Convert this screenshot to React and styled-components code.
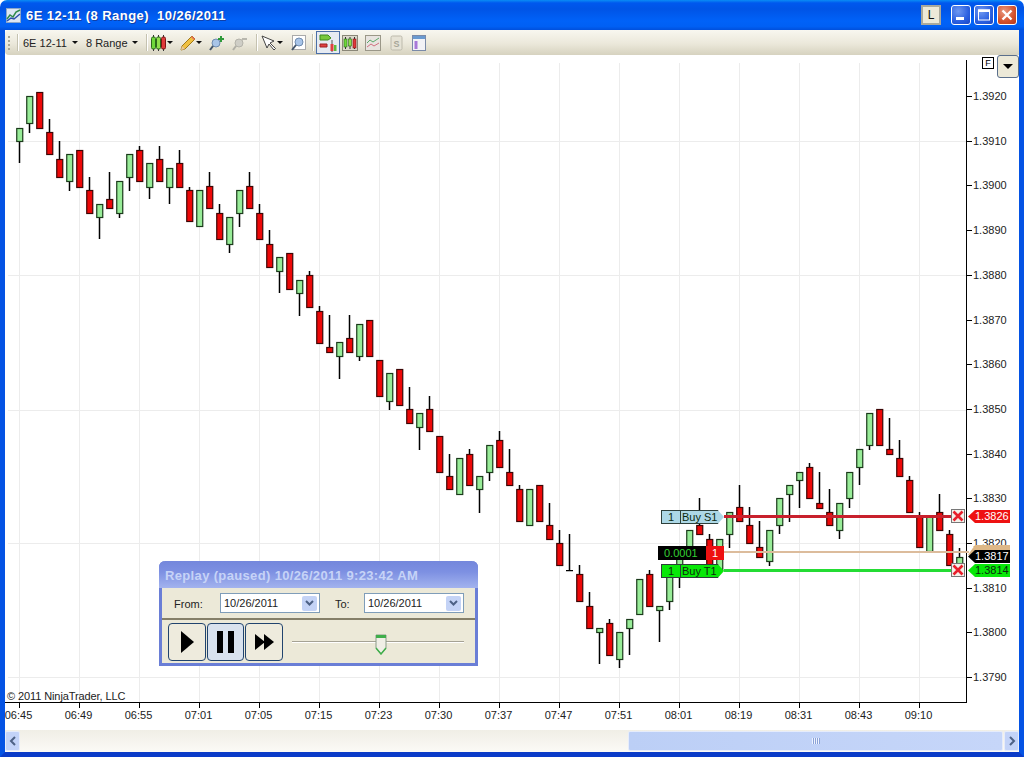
import { createGlobalStyle, styled } from 'styled-components';

const GlobalStyle = createGlobalStyle`
  html, body {
    margin: 0;
    padding: 0;
    background: #fff;
  }
  * { box-sizing: border-box; }
`;

const FONT = '"Liberation Sans", Arial, sans-serif';

// type, body top, body bottom, wick top, wick bottom (first candle at x=19, every 10px)
const CANDLES = [
  ['g', 128, 141, 128, 163], ['g', 96, 123, 96, 133], ['r', 92, 128, 92, 128], ['r', 132, 154, 119, 154],
  ['r', 159, 177, 141, 177], ['g', 154, 181, 154, 191], ['r', 150, 187, 150, 187], ['r', 190, 213, 177, 213],
  ['g', 204, 217, 204, 239], ['r', 199, 208, 172, 208], ['g', 181, 213, 181, 218], ['g', 154, 177, 154, 191],
  ['r', 150, 181, 146, 181], ['g', 163, 187, 163, 199], ['r', 159, 181, 146, 181], ['g', 168, 187, 168, 204],
  ['r', 163, 187, 150, 187], ['r', 190, 221, 187, 221], ['g', 190, 226, 190, 226], ['r', 186, 208, 172, 208],
  ['r', 213, 239, 204, 239], ['g', 217, 244, 217, 253], ['g', 190, 213, 190, 227], ['r', 186, 208, 172, 208],
  ['r', 213, 239, 204, 239], ['r', 244, 267, 230, 267], ['g', 257, 271, 257, 293], ['r', 253, 289, 253, 289],
  ['g', 280, 293, 280, 316], ['r', 275, 307, 271, 307], ['r', 311, 343, 306, 343], ['r', 347, 352, 315, 352],
  ['g', 342, 356, 342, 379], ['r', 338, 352, 315, 352], ['g', 324, 356, 324, 361], ['r', 320, 356, 320, 356],
  ['r', 360, 396, 360, 396], ['g', 373, 401, 373, 410], ['r', 369, 405, 369, 405], ['r', 409, 423, 387, 423],
  ['g', 413, 427, 413, 450], ['r', 409, 431, 396, 431], ['r', 436, 472, 436, 472], ['r', 476, 489, 454, 489],
  ['g', 458, 494, 458, 494], ['r', 454, 485, 449, 485], ['g', 476, 489, 476, 513], ['g', 445, 472, 445, 481],
  ['r', 440, 467, 431, 467], ['r', 472, 485, 449, 485], ['r', 489, 521, 485, 521], ['g', 489, 525, 489, 525],
  ['r', 485, 521, 485, 521], ['r', 525, 539, 503, 539], ['r', 543, 565, 530, 565], ['d', 570, 570, 534, 570],
  ['r', 574, 601, 565, 601], ['r', 606, 628, 592, 628], ['g', 628, 632, 628, 664], ['r', 623, 655, 619, 655],
  ['g', 632, 659, 632, 668], ['g', 619, 628, 619, 655], ['g', 579, 614, 579, 614], ['r', 574, 606, 570, 606],
  ['g', 606, 610, 606, 642], ['g', 565, 601, 565, 610], ['g', 547, 565, 547, 588], ['g', 530, 556, 530, 556],
  ['r', 525, 534, 498, 534], ['r', 539, 565, 534, 565], ['g', 539, 570, 539, 570], ['g', 512, 534, 512, 548],
  ['r', 507, 521, 485, 521], ['r', 525, 543, 507, 543], ['r', 547, 557, 521, 557], ['g', 530, 561, 530, 566],
  ['g', 498, 525, 498, 534], ['g', 485, 494, 485, 522], ['g', 472, 480, 472, 508], ['r', 467, 498, 463, 498],
  ['r', 503, 508, 472, 508], ['r', 512, 525, 489, 525], ['g', 503, 530, 503, 539], ['g', 472, 498, 472, 508],
  ['g', 449, 467, 449, 485], ['g', 413, 445, 413, 450], ['r', 409, 445, 409, 445], ['r', 449, 454, 418, 454],
  ['r', 458, 476, 440, 476], ['r', 480, 512, 476, 512], ['r', 516, 547, 512, 547], ['g', 516, 551, 516, 551],
  ['r', 512, 530, 494, 530], ['r', 534, 565, 530, 565], ['g', 557, 565, 548, 565],
];

const TIMES = ['06:45', '06:49', '06:55', '07:01', '07:05', '07:15', '07:23', '07:30', '07:37', '07:47', '07:51', '08:01', '08:19', '08:31', '08:43', '09:10'];
const PRICES = ['1.3920', '1.3910', '1.3900', '1.3890', '1.3880', '1.3870', '1.3860', '1.3850', '1.3840', '1.3830', '1.3820', '1.3810', '1.3800', '1.3790'];
const H_GRID = [141, 275, 410, 543, 677];

const Window = styled.div`
  position: relative;
  width: 1024px;
  height: 757px;
  display: flex;
  flex-direction: column;
  font-family: ${FONT};
  overflow: hidden;
`;

const TitleBar = styled.header`
  height: 30px;
  flex: none;
  display: flex;
  align-items: center;
  padding: 0 7px 0 6px;
  border-radius: 7px 7px 0 0;
  background: linear-gradient(180deg, #0a8cf5 0%, #0058ee 10%, #0054e6 30%, #0062f8 70%, #0060f4 88%, #0050dc 100%);
`;

const TitleText = styled.h1`
  margin: 0 0 0 5px;
  font-size: 13px;
  font-weight: bold;
  color: #fff;
  white-space: pre;
  letter-spacing: 0.45px;
  text-shadow: 1px 1px 0 #0f3fa8;
`;

const WindowControls = styled.div`
  margin-left: auto;
  display: flex;
  align-items: center;
  gap: 3px;
`;

const PinButton = styled.div`
  width: 20px;
  height: 20px;
  margin-right: 7px;
  display: flex;
  align-items: center;
  justify-content: center;
  font-size: 12px;
  color: #111;
  background: #ece9d8;
  border: 2px solid #a9a99c;
`;

const CaptionButton = styled.div`
  width: 20px;
  height: 20px;
  border: 1px solid #fff;
  border-radius: 3px;
  display: flex;
  align-items: center;
  justify-content: center;
  background: ${(p) =>
    p.$close
      ? 'radial-gradient(circle at 35% 30%, #e89a80, #d4502c 60%, #b83a18)'
      : 'radial-gradient(circle at 35% 30%, #6f98f0, #2a5fe0 60%, #1a46c4)'};
`;

const Frame = styled.div`
  flex: 1;
  min-height: 0;
  display: flex;
  flex-direction: column;
  border-left: 5px solid #0453e4;
  border-right: 5px solid #0453e4;
  border-bottom: 5px solid #0a3bc8;
  background: #fff;
`;

const Toolbar = styled.div`
  height: 25px;
  flex: none;
  display: flex;
  align-items: center;
  border-radius: 4px 0 0 4px;
  background: linear-gradient(180deg, #f8f7f0 0%, #ebe8da 55%, #d6d2bf 100%);
  font-size: 11px;
  color: #222;
`;

const Grip = styled.div`
  width: 2px;
  height: 14px;
  margin-left: 3px;
  background: repeating-linear-gradient(180deg, #a8a594 0 2px, transparent 2px 4px);
`;

const ToolSep = styled.div`
  width: 1px;
  height: 17px;
  margin-left: ${(p) => p.$ml}px;
  background: #c5c2b0;
  box-shadow: 1px 0 0 #fff;
`;

const DropText = styled.span`
  width: ${(p) => p.$w}px;
  margin-left: ${(p) => p.$ml}px;
  white-space: nowrap;
`;

const Caret = styled.span`
  flex: none;
  width: 0;
  height: 0;
  margin-left: ${(p) => p.$ml}px;
  border-left: 3px solid transparent;
  border-right: 3px solid transparent;
  border-top: 3px solid #111;
`;

const ToolIcon = styled.svg`
  flex: none;
  width: ${(p) => p.$w || 16}px;
  height: 16px;
  margin-left: ${(p) => p.$ml}px;
`;

const ToggleButton = styled.div`
  flex: none;
  width: 24px;
  height: 23px;
  margin-left: 3px;
  display: flex;
  align-items: center;
  justify-content: center;
  border: 1px solid #4b6fa8;
  background: #e6ebf2;
`;

const ChartArea = styled.main`
  position: relative;
  flex: 1;
  min-height: 0;
`;

const ChartSvg = styled.svg`
  display: block;
  width: 1014px;
  height: 675px;
  font-family: ${FONT};
  font-size: 11px;
`;

const ScaleBox = styled.div`
  position: absolute;
  left: 977px;
  top: 2px;
  width: 12px;
  height: 12px;
  display: flex;
  align-items: center;
  justify-content: center;
  border: 1px solid #000;
  background: #fff;
  font-size: 9px;
`;

const ScaleMenu = styled.div`
  position: absolute;
  left: 992px;
  top: 0;
  width: 22px;
  height: 23px;
  display: flex;
  align-items: center;
  justify-content: center;
  border: 1px solid #5a6f8c;
  border-radius: 3px;
  background: #ece9d8;
  &::after {
    content: '';
    border-left: 5px solid transparent;
    border-right: 5px solid transparent;
    border-top: 5px solid #000;
  }
`;

const OrderLine = styled.div`
  position: absolute;
  left: ${(p) => p.$x - 5}px;
  top: ${(p) => p.$y - 55}px;
  width: ${(p) => p.$w}px;
  height: ${(p) => p.$h || 3}px;
  background: ${(p) => p.$color};
`;

const OrderTag = styled.div`
  position: absolute;
  left: ${(p) => p.$x - 5}px;
  top: ${(p) => p.$y - 55}px;
  width: 63px;
  height: 14px;
  display: flex;
  font-size: 11px;
  line-height: 12px;
  color: #0c2a10;
  background: ${(p) => p.$color};
  border: 1px solid #2d3f3a;
  border-right: none;
  clip-path: polygon(0 0, 90% 0, 100% 50%, 90% 100%, 0 100%);
`;

const TagQty = styled.span`
  width: 19px;
  text-align: center;
  border-right: 1px solid #2d3f3a;
`;

const TagName = styled.span`
  padding-left: 1px;
  white-space: nowrap;
`;

const PnlTag = styled.div`
  position: absolute;
  left: 653px;
  top: 491px;
  width: 66px;
  height: 14px;
  display: flex;
  font-size: 11px;
  line-height: 14px;
`;

const PnlValue = styled.span`
  width: 48px;
  padding-left: 6px;
  background: #000;
  color: #34d034;
`;

const PnlQty = styled.span`
  flex: 1;
  text-align: center;
  background: #ee1111;
  color: #fff;
`;

const CloseBox = styled.div`
  position: absolute;
  left: 946px;
  top: ${(p) => p.$y - 55}px;
  width: 14px;
  height: 14px;
  display: flex;
  border: 1px solid #777;
  background: #f4f1ea;
`;

const PriceTag = styled.div`
  position: absolute;
  left: 963px;
  top: ${(p) => p.$y - 55}px;
  width: 42px;
  height: 13px;
  padding-left: 7px;
  font-size: 11px;
  line-height: 13px;
  color: ${(p) => p.$color};
  background: ${(p) => p.$bg};
  clip-path: polygon(0 50%, 7px 0, 100% 0, 100% 100%, 7px 100%);
`;

const TanCap = styled.div`
  position: absolute;
  left: 963px;
  top: 490px;
  width: 42px;
  height: 10px;
  background: #deb887;
  clip-path: polygon(0 100%, 7px 0, 100% 0, 100% 100%);
`;

const ReplayPanel = styled.section`
  position: absolute;
  left: 154px;
  top: 506px;
  width: 319px;
  height: 105px;
  display: flex;
  flex-direction: column;
  border: 3px solid #6a7ed6;
  border-top: none;
  border-radius: 6px 6px 0 0;
  background: #ece9d8;
`;

const ReplayTitle = styled.div`
  height: 27px;
  flex: none;
  margin: 0 -3px;
  padding: 1px 0 0 6px;
  display: flex;
  align-items: center;
  border-radius: 6px 6px 0 0;
  background: linear-gradient(180deg, #7487dc 0%, #7d90e2 40%, #a3b3ee 100%);
  color: #c6d3f7;
  font-size: 13px;
  font-weight: bold;
  letter-spacing: 0.35px;
  white-space: nowrap;
`;

const RangeRow = styled.div`
  height: 32px;
  flex: none;
  display: flex;
  align-items: center;
  padding: 0 0 0 12px;
  border-bottom: 2px solid #857f68;
  font-size: 11px;
  color: #222;
`;

const RangeLabel = styled.span`
  width: ${(p) => p.$w}px;
  padding-top: 2px;
`;

const DateCombo = styled.div`
  width: 100px;
  height: 20px;
  display: flex;
  align-items: center;
  justify-content: space-between;
  padding: 0 2px 0 3px;
  border: 1px solid #7f9db9;
  background: #fff;
  font-size: 11px;
  margin-right: ${(p) => p.$mr || 0}px;
`;

const ComboArrow = styled.div`
  width: 15px;
  height: 15px;
  display: flex;
  align-items: center;
  justify-content: center;
  border-radius: 2px;
  background: #c4d3f6;
`;

const TransportRow = styled.div`
  flex: 1;
  display: flex;
  align-items: center;
  padding: 0 0 0 6px;
  gap: 1px;
`;

const TransportButton = styled.div`
  width: ${(p) => p.$w}px;
  height: 38px;
  display: flex;
  align-items: center;
  justify-content: center;
  border: 1px solid #21446e;
  border-radius: 4px;
  background: ${(p) => (p.$on ? '#d9e2ee' : '#eeebdd')};
`;

const SliderTrack = styled.div`
  position: relative;
  width: 172px;
  height: 2px;
  margin-left: 8px;
  background: #a5a294;
  border-bottom: 1px solid #fff;
`;

const SliderThumb = styled.svg`
  position: absolute;
  left: 83px;
  top: -8px;
  width: 12px;
  height: 22px;
`;

const ScrollBar = styled.div`
  height: 22px;
  flex: none;
  display: flex;
  align-items: stretch;
  padding: 1px 0;
  background: linear-gradient(180deg, #f0eee6 0%, #fbfaf6 100%);
`;

const ScrollButton = styled.div`
  width: 15px;
  display: flex;
  align-items: center;
  justify-content: center;
  border: 1px solid #e6ecfb;
  border-radius: 2px;
  background: #c3d3f8;
`;

const ScrollTrack = styled.div`
  flex: 1;
  padding-left: 608px;
  padding-right: 1px;
  display: flex;
`;

const ScrollThumb = styled.div`
  flex: 1;
  display: flex;
  align-items: center;
  justify-content: center;
  border: 1px solid #e6ecfb;
  border-radius: 2px;
  background: linear-gradient(90deg, #bccff6 0%, #c6d6f9 100%);
`;

const ThumbGrip = styled.div`
  width: 8px;
  height: 6px;
  background: repeating-linear-gradient(90deg, #eef3fe 0 1px, #8aa2d8 1px 2px);
`;

function Candle({ c, i }) {
  const [type, top, bottom, wickTop, wickBottom] = c;
  const x = 19 + i * 10;
  if (type === 'd') {
    return (
      <g fill="#000">
        <rect x={x - 0.25} y={wickTop} width={1.5} height={wickBottom - wickTop} />
        <rect x={x - 3} y={top} width={7} height={1.25} />
      </g>
    );
  }
  return (
    <g>
      <rect x={x - 0.25} y={wickTop} width={1.5} height={wickBottom - wickTop} fill="#000" />
      <rect
        x={x - 2.25}
        y={top + 0.5}
        width={6}
        height={bottom - top}
        fill={type === 'g' ? '#98ec98' : '#ee0808'}
        stroke={type === 'g' ? '#1a3a1a' : '#3c0505'}
        strokeWidth={1.2}
      />
    </g>
  );
}

function Chart() {
  return (
    <ChartSvg viewBox="5 55 1014 675">
      <g stroke="#ececec" strokeWidth={1} shapeRendering="crispEdges">
        {TIMES.map((t, i) => (
          <line key={t} x1={19.5 + i * 60} x2={19.5 + i * 60} y1={63} y2={702} />
        ))}
        {H_GRID.map((y) => (
          <line key={y} x1={8} x2={966} y1={y + 0.5} y2={y + 0.5} />
        ))}
      </g>
      {CANDLES.map((c, i) => (
        <Candle key={i} c={c} i={i} />
      ))}
      <g stroke="#000" strokeWidth={1} shapeRendering="crispEdges">
        <line x1={5} x2={967} y1={702.5} y2={702.5} />
        <line x1={966.5} x2={966.5} y1={60} y2={702} />
        {TIMES.map((t, i) => (
          <line key={t} x1={19.5 + i * 60} x2={19.5 + i * 60} y1={702} y2={708} />
        ))}
        {PRICES.map((p, i) => (
          <line key={p} x1={966} x2={972} y1={96.5 + i * 44.7} y2={96.5 + i * 44.7} />
        ))}
      </g>
      <g fill="#222">
        {TIMES.map((t, i) => (
          <text key={t} x={18.5 + i * 60} y={719} textAnchor="middle">
            {t}
          </text>
        ))}
        {PRICES.map((p, i) => (
          <text key={p} x={973} y={100 + i * 44.7}>
            {p}
          </text>
        ))}
        <text x={7} y={700} letterSpacing="-0.1">
          © 2011 NinjaTrader, LLC
        </text>
      </g>
    </ChartSvg>
  );
}

const CloseMark = () => (
  <svg width="12" height="12" viewBox="0 0 12 12">
    <path d="M1.5 1.5l9 9M10.5 1.5l-9 9" stroke="#e8202c" strokeWidth="2.6" />
  </svg>
);

const ComboChevron = () => (
  <ComboArrow>
    <svg width="9" height="7" viewBox="0 0 9 7">
      <path d="M1 1l3.5 3.5L8 1" fill="none" stroke="#4d6185" strokeWidth="2" />
    </svg>
  </ComboArrow>
);

export default function App() {
  return (
    <Window>
      <GlobalStyle />
      <TitleBar>
        <svg width="15" height="15" viewBox="0 0 15 15">
          <rect x="0.5" y="0.5" width="14" height="14" fill="#dce6f4" stroke="#8ca6c8" />
          <path d="M1 11l3-4 3 2 3-5 4-2" fill="none" stroke="#2f8a4a" strokeWidth="1.5" />
          <path d="M1 13l4-3 3 1 6-5" fill="none" stroke="#2a4fa8" strokeWidth="1.5" />
        </svg>
        <TitleText>{'6E 12-11 (8 Range)  10/26/2011'}</TitleText>
        <WindowControls>
          <PinButton>L</PinButton>
          <CaptionButton>
            <svg width="14" height="14" viewBox="0 0 14 14">
              <rect x="2" y="9" width="8" height="3" fill="#fff" />
            </svg>
          </CaptionButton>
          <CaptionButton>
            <svg width="14" height="14" viewBox="0 0 14 14">
              <rect x="1.5" y="2" width="11" height="10" fill="none" stroke="#fff" />
              <rect x="1" y="1.5" width="12" height="2.5" fill="#fff" />
            </svg>
          </CaptionButton>
          <CaptionButton $close>
            <svg width="14" height="14" viewBox="0 0 14 14">
              <path d="M2.5 2.5l9 9M11.5 2.5l-9 9" stroke="#fff" strokeWidth="2.4" />
            </svg>
          </CaptionButton>
        </WindowControls>
      </TitleBar>
      <Frame>
        <Toolbar>
          <Grip />
          <ToolSep $ml={7} />
          <DropText $ml={5} $w={44}>6E 12-11</DropText>
          <Caret $ml={5} />
          <DropText $ml={8} $w={41}>8 Range</DropText>
          <Caret $ml={5} />
          <ToolSep $ml={8} />
          <ToolIcon $ml={4} $w={15} viewBox="0 0 15 16">
            <path d="M2.5 0v16M7.5 0v16M12.5 0v16" stroke="#333" />
            <rect x="0.5" y="2" width="4" height="12" rx="1.5" fill="#6fd83a" stroke="#2c6a1a" />
            <rect x="5.5" y="2" width="4" height="12" rx="1.5" fill="#8fe04a" stroke="#2c6a1a" />
            <rect x="10.5" y="2" width="4" height="12" rx="1.5" fill="#e03a3a" stroke="#7c1616" />
          </ToolIcon>
          <Caret $ml={1} />
          <ToolIcon $ml={7} viewBox="0 0 16 16">
            <path d="M1 15l1-4L12 1l3 3L5 14z" fill="#f0c040" stroke="#a07818" />
            <path d="M1 15l1-4 3 3z" fill="#e8c8a0" />
            <path d="M11 2l3 3 1-1-3-3z" fill="#e86a5a" />
          </ToolIcon>
          <Caret $ml={0} />
          <ToolIcon $ml={7} viewBox="0 0 16 16">
            <circle cx="7" cy="8" r="4" fill="#a8c4e8" stroke="#6f8cb0" />
            <path d="M4 11l-3 4" stroke="#44556a" strokeWidth="2" />
            <path d="M12 1v6M9 4h6" stroke="#2f9a3a" strokeWidth="2" />
          </ToolIcon>
          <ToolIcon $ml={7} viewBox="0 0 16 16">
            <circle cx="7" cy="8" r="4" fill="#cfcec6" stroke="#b4b3aa" />
            <path d="M4 11l-3 4" stroke="#b0afa6" strokeWidth="2" />
            <path d="M10 4h5" stroke="#b8b7ae" strokeWidth="2" />
          </ToolIcon>
          <ToolSep $ml={8} />
          <ToolIcon $ml={4} viewBox="0 0 16 16">
            <path d="M1 1l5 12 2-4 5 6 1.5-1.5L9 8l4-2z" fill="#fff" stroke="#444" strokeLinejoin="round" />
          </ToolIcon>
          <Caret $ml={0} />
          <ToolIcon $ml={7} viewBox="0 0 16 16">
            <rect x="2.5" y="0.5" width="13" height="14" fill="#fff" stroke="#aaa" />
            <circle cx="9" cy="7" r="4" fill="#a8c4e8" stroke="#6f8cb0" />
            <path d="M6 10l-4 5" stroke="#44556a" strokeWidth="2" />
          </ToolIcon>
          <ToolSep $ml={6} />
          <ToggleButton>
            <svg width="18" height="18" viewBox="0 0 18 18">
              <path d="M1 1h8l3 3-3 2H1z" fill="#78c83c" stroke="#3f8a20" />
              <path d="M1 10h7v3H1z" fill="#e04040" stroke="#9c2020" />
              <path d="M13 6v12" stroke="#555" />
              <rect x="11.5" y="10" width="3" height="7" fill="#e04040" />
              <rect x="15" y="11" width="2.5" height="6" fill="#5cbc3a" />
            </svg>
          </ToggleButton>
          <ToolIcon $ml={2} viewBox="0 0 16 16">
            <rect x="0.5" y="0.5" width="15" height="15" fill="#dcd9ca" stroke="#8a8778" />
            <path d="M3.5 2v12M8 2v12M12.5 2v12" stroke="#333" />
            <rect x="2" y="4" width="3" height="8" fill="#6fd83a" stroke="#2c6a1a" strokeWidth=".6" />
            <rect x="6.5" y="4" width="3" height="7" fill="#8fe04a" stroke="#2c6a1a" strokeWidth=".6" />
            <rect x="11" y="4" width="3" height="9" fill="#e03a3a" stroke="#7c1616" strokeWidth=".6" />
          </ToolIcon>
          <ToolIcon $ml={7} viewBox="0 0 16 16">
            <rect x="0.5" y="0.5" width="15" height="15" fill="#e8e4e0" stroke="#9a9788" />
            <path d="M2 8l3-3 3 2 6-4" fill="none" stroke="#5aa86a" />
            <path d="M2 12l4-3 3 2 5-3" fill="none" stroke="#d07080" />
          </ToolIcon>
          <ToolIcon $ml={9} $w={13} viewBox="0 0 13 16">
            <rect x="1" y="1" width="11" height="14" rx="1.5" fill="#e6e3d6" stroke="#bdbaac" />
            <text x="6.5" y="11.5" textAnchor="middle" fontSize="9" fontWeight="bold" fill="#a8a698">
              S
            </text>
          </ToolIcon>
          <ToolIcon $ml={9} $w={14} viewBox="0 0 14 16">
            <rect x="0.5" y="0.5" width="13" height="15" fill="#f2f2f6" stroke="#7a8aa8" />
            <rect x="1" y="1" width="12" height="3" fill="#6a9ad0" />
            <rect x="2.5" y="6" width="3" height="8" fill="#a878d8" />
          </ToolIcon>
        </Toolbar>
        <ChartArea>
          <Chart />
          <ScaleBox>F</ScaleBox>
          <ScaleMenu />
          <OrderLine $x={724} $y={515} $w={228} $color="#c8202c" />
          <OrderLine $x={724} $y={551} $w={245} $h={2} $color="#dcbc9c" />
          <OrderLine $x={724} $y={569} $w={228} $color="#24dc34" />
          <OrderTag $x={661} $y={510} $color="#add8e6">
            <TagQty>1</TagQty>
            <TagName>Buy S1</TagName>
          </OrderTag>
          <PnlTag>
            <PnlValue>0.0001</PnlValue>
            <PnlQty>1</PnlQty>
          </PnlTag>
          <OrderTag $x={661} $y={564} $color="#08e808">
            <TagQty>1</TagQty>
            <TagName>Buy T1</TagName>
          </OrderTag>
          <CloseBox $y={509}>
            <CloseMark />
          </CloseBox>
          <CloseBox $y={563}>
            <CloseMark />
          </CloseBox>
          <PriceTag $y={510} $bg="#ee1111" $color="#fff">
            1.3826
          </PriceTag>
          <TanCap />
          <PriceTag $y={550} $bg="#000" $color="#fff">
            1.3817
          </PriceTag>
          <PriceTag $y={564} $bg="#08e808" $color="#0c2a10">
            1.3814
          </PriceTag>
          <ReplayPanel>
            <ReplayTitle>Replay (paused) 10/26/2011 9:23:42 AM</ReplayTitle>
            <RangeRow>
              <RangeLabel $w={46}>From:</RangeLabel>
              <DateCombo $mr={15}>
                10/26/2011
                <ComboChevron />
              </DateCombo>
              <RangeLabel $w={29}>To:</RangeLabel>
              <DateCombo>
                10/26/2011
                <ComboChevron />
              </DateCombo>
            </RangeRow>
            <TransportRow>
              <TransportButton $w={38}>
                <svg width="14" height="22" viewBox="0 0 14 22">
                  <path d="M1 0l13 11L1 22z" fill="#000" />
                </svg>
              </TransportButton>
              <TransportButton $w={37} $on>
                <svg width="18" height="22" viewBox="0 0 18 22">
                  <path d="M0 0h6v22H0zM11 0h6v22h-6z" fill="#000" />
                </svg>
              </TransportButton>
              <TransportButton $w={38}>
                <svg width="19" height="16" viewBox="0 0 19 16">
                  <path d="M0 0l10 8-10 8zM9 0l10 8-10 8z" fill="#000" />
                </svg>
              </TransportButton>
              <SliderTrack>
                <SliderThumb viewBox="0 0 12 22">
                  <path d="M1 2h10v13l-5 6-5-6z" fill="#f0efe6" stroke="#8a9a88" />
                  <path d="M1 2h10v3H1z" fill="#3fae4a" />
                  <path d="M1 15l5 6 5-6" fill="none" stroke="#3fae4a" strokeWidth="1.5" />
                </SliderThumb>
              </SliderTrack>
            </TransportRow>
          </ReplayPanel>
        </ChartArea>
        <ScrollBar>
          <ScrollButton>
            <svg width="8" height="10" viewBox="0 0 8 10">
              <path d="M6 1L2 5l4 4" fill="none" stroke="#4d6185" strokeWidth="2" />
            </svg>
          </ScrollButton>
          <ScrollTrack>
            <ScrollThumb>
              <ThumbGrip />
            </ScrollThumb>
          </ScrollTrack>
          <ScrollButton>
            <svg width="8" height="10" viewBox="0 0 8 10">
              <path d="M2 1l4 4-4 4" fill="none" stroke="#4d6185" strokeWidth="2" />
            </svg>
          </ScrollButton>
        </ScrollBar>
      </Frame>
    </Window>
  );
}
